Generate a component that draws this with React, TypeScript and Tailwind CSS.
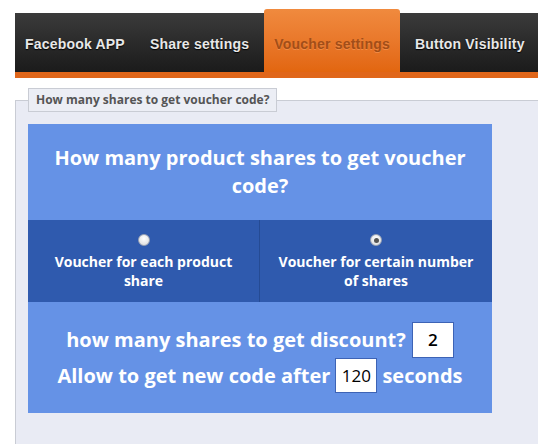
import React from "react";

const navFont = { fontFamily: '"Liberation Sans", Arial, sans-serif' };
const openSans = { fontFamily: '"Open Sans", "Noto Sans", sans-serif' };

function Radio({ checked }: { checked?: boolean }) {
  return (
    <span className="flex h-[12px] w-[12px] items-center justify-center rounded-full border border-[#9aa3b5] bg-[radial-gradient(circle_at_50%_35%,#ffffff,#d8d8d8)]">
      {checked && <span className="h-[5px] w-[5px] rounded-full bg-[#555]" />}
    </span>
  );
}

export default function App() {
  const tabs = ["Facebook APP", "Share settings", "Voucher settings", "Button Visibility"];
  return (
    <div className="h-[444px] w-[538px] overflow-hidden bg-white">
      <div
        className="ml-[15px] mt-[13px] flex h-[65px] items-stretch gap-[5px] border-b-[6px] border-[#e0661a] bg-gradient-to-b from-[#3b3b3b] to-[#1b1b1b]"
        style={navFont}
      >
        {tabs.map((t, i) =>
          i === 2 ? (
            <div
              key={t}
              className="-mt-[4px] flex h-[63px] items-center rounded-t-[3px] bg-gradient-to-b from-[#f08a3e] to-[#e2660f] px-[10px] pt-[7px] text-[14px] font-bold tracking-[0.2px] text-[#a24e18] [text-shadow:0_1px_0_rgba(255,170,110,0.45)]"
            >
              {t}
            </div>
          ) : (
            <div
              key={t}
              className="flex items-center px-[10px] pt-[3px] text-[14px] font-bold tracking-[0.2px] text-[#e8e8e8] [text-shadow:0_1px_1px_#000]"
            >
              {t}
            </div>
          )
        )}
      </div>

      <fieldset
        className="ml-[15px] mt-[10px] h-[380px] w-[540px] border border-[#c9ccd4] bg-[#e9ebf4] pl-[12px] pt-[12px]"
        style={openSans}
      >
        <legend className="border border-[#c9ccd4] bg-[#eceef5] px-[7px] text-[12px] font-bold leading-[22px] text-[#555]">
          How many shares to get voucher code?
        </legend>
        <div className="w-[464px] bg-[#6592e6] text-white">
          <div className="px-[20px] py-[20px] text-center text-[20px] font-bold leading-[28px]">
            How many product shares to get voucher code?
          </div>
          <div className="grid h-[82px] grid-cols-2 bg-[#2f5aae]">
            <div className="flex flex-col items-center border-r border-[#254b94] pt-[14px] text-center text-[14px] font-bold leading-[19px]">
              <Radio />
              <div className="mt-[6px] px-[20px]">Voucher for each product share</div>
            </div>
            <div className="flex flex-col items-center pt-[14px] text-center text-[14px] font-bold leading-[19px]">
              <Radio checked />
              <div className="mt-[6px] px-[16px]">Voucher for certain number of shares</div>
            </div>
          </div>
          <div className="flex flex-col items-center px-[10px] py-[20px] text-[20px] font-bold">
            <div className="flex h-[36px] items-center">
              <span>how many shares to get discount?</span>
              <span className="ml-[6px] flex h-[36px] w-[42px] items-center justify-center border border-[#3d63b5] bg-white text-[17px] font-semibold text-black">
                2
              </span>
            </div>
            <div className="flex h-[35px] items-center">
              <span>Allow to get new code after</span>
              <span className="mx-[5px] flex h-[35px] w-[42px] items-center justify-center border border-[#3d63b5] bg-white text-[17px] font-normal text-black">
                120
              </span>
              <span>seconds</span>
            </div>
          </div>
        </div>
      </fieldset>
    </div>
  );
}
